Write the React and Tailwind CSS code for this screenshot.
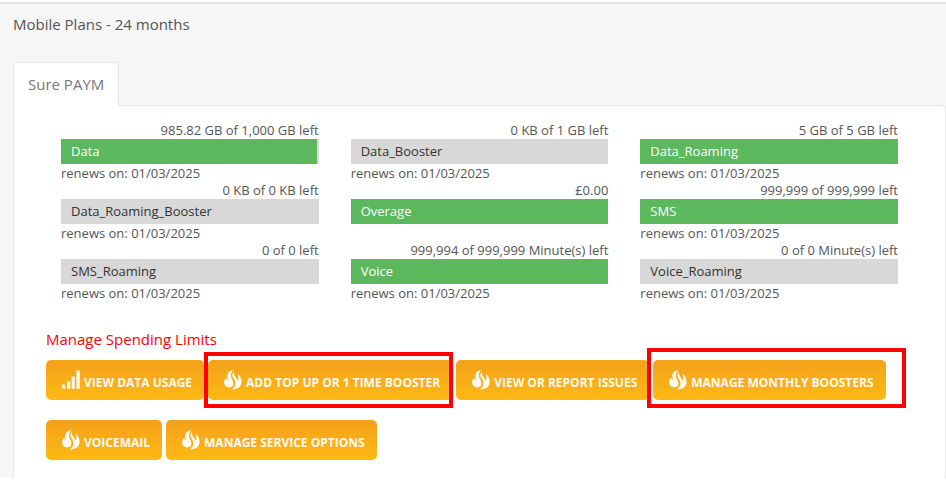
import React from 'react';

const ALLOWANCES = [
  { name: 'Data', left: '985.82 GB of 1,000 GB left', percent: 99.4, renews: '01/03/2025' },
  { name: 'Data_Booster', left: '0 KB of 1 GB left', percent: 0, renews: '01/03/2025' },
  { name: 'Data_Roaming', left: '5 GB of 5 GB left', percent: 100, renews: '01/03/2025' },
  { name: 'Data_Roaming_Booster', left: '0 KB of 0 KB left', percent: 0, renews: '01/03/2025' },
  { name: 'Overage', left: '£0.00', percent: 100 },
  { name: 'SMS', left: '999,999 of 999,999 left', percent: 100, renews: '01/03/2025' },
  { name: 'SMS_Roaming', left: '0 of 0 left', percent: 0, renews: '01/03/2025' },
  { name: 'Voice', left: '999,994 of 999,999 Minute(s) left', percent: 100, renews: '01/03/2025' },
  { name: 'Voice_Roaming', left: '0 of 0 Minute(s) left', percent: 0, renews: '01/03/2025' },
];

const ACTIONS = [
  { label: 'View data usage', icon: 'signal' },
  { label: 'Add top up or 1 time booster', highlight: 'tight' },
  { label: 'View or report issues' },
  { label: 'Manage monthly boosters', highlight: 'wide' },
  { label: 'Voicemail' },
  { label: 'Manage service options' },
];

const SignalIcon = () => (
  <svg className="h-5 w-[18px] shrink-0" viewBox="0 0 18 20" fill="currentColor" aria-hidden="true">
    <path d="M.2 14.4h3v4.400h-3zM5 11.200h3.200v7.600H5zM9.600 6.600h3.200v12.200H9.600zM14.400.4h3.400v18.400h-3.400z" />
  </svg>
);

const FlameIcon = () => (
  <svg className="h-5 w-[18px] shrink-0" viewBox="0 0 18 20" fill="currentColor" aria-hidden="true">
    <path d="M9.400 0C5.200.6 2.900 3.400 3.300 6.800c.1 1.400.8 2.200.6 3.400-.8-.4-1.200-1.400-1.300-2.600C.8 8.800-.1 10.800.1 13c.3 2.700 2.300 4.400 5 4.400 2.700 0 4.400-1.500 4.300-3.800C9.300 10.600 7 8.800 6.900 5.600 6.800 3.200 7.900 1.400 9.400 0z" />
    <path d="M9.700 1.400C7.900 3.800 8 6.200 9.600 8.400c1.300 1.900 2 3.600 1.700 5.800-.3 2.200-1.500 3.900-3.500 5.300 5.600.2 9.700-2.800 9.800-7.500.1-3.500-1.300-6.300-4.200-8.200 1.300 2.800 1.500 5.200.2 7.200-.3-3.600-4.300-5-3.900-9.600z" />
  </svg>
);

const Allowance = ({ item }) => {
  const isEmpty = item.percent === 0;
  return (
    <div className="h-[60px] text-[13px] leading-[18px] text-[#555]">
      <p className="text-right">{item.left}</p>
      <div className="relative h-[25px] bg-[#d8d8d8]">
        <div className="h-full bg-[#5cb85c]" style={{ width: `${item.percent}%` }} />
        <span
          className={`absolute inset-0 px-2.5 leading-[25px] ${isEmpty ? 'text-[#333]' : 'text-white'}`}
        >
          {item.name}
        </span>
      </div>
      {item.renews && <p>renews on: {item.renews}</p>}
    </div>
  );
};

const ActionButton = ({ action }) => (
  <div className="relative">
    <button
      type="button"
      className="flex h-10 items-center gap-1 rounded-[5px] bg-linear-to-b from-[#f4a11a] to-[#fdb913] pr-3 pl-4 text-[12px] font-bold uppercase text-[#fffaf0]"
    >
      {action.icon === 'signal' ? <SignalIcon /> : <FlameIcon />}
      <span className="pt-1.5">{action.label}</span>
    </button>
    {action.highlight === 'tight' && (
      <div className="pointer-events-none absolute -top-2 -right-px -bottom-2 -left-1 z-10 border-4 border-[#f00]" />
    )}
    {action.highlight === 'wide' && (
      <div className="pointer-events-none absolute -top-3 -right-5 -bottom-2 -left-1.5 z-10 border-4 border-[#f00]" />
    )}
  </div>
);

const App = () => (
  <div className="border-t-2 border-white pb-1.5 font-['Open_Sans',sans-serif]">
    <main className="border-t-2 border-[#e7e7e7] bg-[#f6f6f6] pl-[13px]">
      <h1 className="pt-2.5 text-[15px] leading-5 text-[#555]">Mobile Plans - 24 months</h1>
      <div className="mt-7 flex">
        <button
          type="button"
          className="relative z-10 -mb-px h-11 rounded-t border border-b-0 border-[#e7e7e7] bg-white px-3.5 text-[15px] text-[#777]"
        >
          Sure PAYM
        </button>
      </div>
      <section className="rounded-tr border-x border-t border-[#e7e7e7] bg-white pt-[15px] pr-[47px] pb-[18px] pl-8">
        <div className="grid grid-cols-3 gap-x-8 pl-[15px]">
          {ALLOWANCES.map((item) => (
            <Allowance key={item.name} item={item} />
          ))}
        </div>
        <a href="#limits" className="mt-7 block w-fit text-[15px] leading-5 text-[#f00]">
          Manage Spending Limits
        </a>
        <div className="mt-[11px] flex flex-wrap gap-x-1 gap-y-5">
          {ACTIONS.map((action) => (
            <ActionButton key={action.label} action={action} />
          ))}
        </div>
      </section>
    </main>
  </div>
);

export default App;
